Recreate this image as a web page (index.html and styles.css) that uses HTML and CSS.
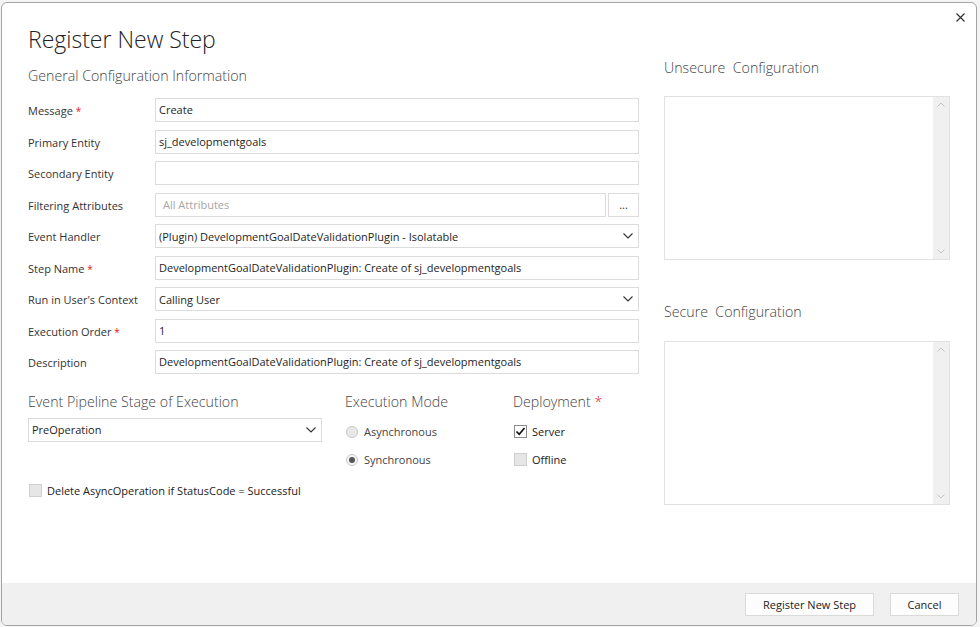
FILE: index.html
```html
<!DOCTYPE html>
<html lang="en">
<head>
    <meta charset="UTF-8">
    <title>Register New Step</title>
    <link rel="stylesheet" href="styles.css">
</head>
<body>
    <div class="dialog">
        <button class="close-btn" title="Close">
            <svg width="9" height="9" viewBox="0 0 9 9"><path d="M0.5 0.5 L8.5 8.5 M8.5 0.5 L0.5 8.5" stroke="#333" stroke-width="1.2"/></svg>
        </button>

        <div class="dialog-body">
            <div class="main-col">
                <h1 class="dialog-title">Register New Step</h1>
                <h2 class="section-title">General Configuration Information</h2>

                <div class="form-grid">
                    <label class="field-label">Message <span class="req">*</span></label>
                    <div class="text-box">Create</div>

                    <label class="field-label">Primary Entity</label>
                    <div class="text-box">sj_developmentgoals</div>

                    <label class="field-label">Secondary Entity</label>
                    <div class="text-box"></div>

                    <label class="field-label">Filtering Attributes</label>
                    <div class="picker">
                        <div class="text-box placeholder">All Attributes</div>
                        <button class="dots-btn">...</button>
                    </div>

                    <label class="field-label">Event Handler</label>
                    <div class="text-box select">
                        <span>(Plugin) DevelopmentGoalDateValidationPlugin - Isolatable</span>
                        <svg class="chevron" width="10" height="6" viewBox="0 0 10 6"><polyline points="0.5,0.5 5,5 9.5,0.5" fill="none" stroke="#333" stroke-width="1.1"/></svg>
                    </div>

                    <label class="field-label">Step Name <span class="req">*</span></label>
                    <div class="text-box">DevelopmentGoalDateValidationPlugin: Create of sj_developmentgoals</div>

                    <label class="field-label">Run in User's Context</label>
                    <div class="text-box select">
                        <span>Calling User</span>
                        <svg class="chevron" width="10" height="6" viewBox="0 0 10 6"><polyline points="0.5,0.5 5,5 9.5,0.5" fill="none" stroke="#333" stroke-width="1.1"/></svg>
                    </div>

                    <label class="field-label">Execution Order <span class="req">*</span></label>
                    <div class="text-box">1</div>

                    <label class="field-label">Description</label>
                    <div class="text-box">DevelopmentGoalDateValidationPlugin: Create of sj_developmentgoals</div>
                </div>

                <div class="options">
                    <div class="option-group stage">
                        <h2 class="section-title">Event Pipeline Stage of Execution</h2>
                        <div class="text-box select">
                            <span>PreOperation</span>
                            <svg class="chevron" width="10" height="6" viewBox="0 0 10 6"><polyline points="0.5,0.5 5,5 9.5,0.5" fill="none" stroke="#333" stroke-width="1.1"/></svg>
                        </div>
                    </div>

                    <div class="option-group">
                        <h2 class="section-title">Execution Mode</h2>
                        <div class="choice"><span class="radio"></span>Asynchronous</div>
                        <div class="choice"><span class="radio on"></span>Synchronous</div>
                    </div>

                    <div class="option-group">
                        <h2 class="section-title">Deployment <span class="req">*</span></h2>
                        <div class="choice dark">
                            <span class="check on">
                                <svg width="11" height="11" viewBox="0 0 11 11"><polyline points="1.5,5.5 4.2,8.3 9.5,2" fill="none" stroke="#111" stroke-width="1.7"/></svg>
                            </span>Server
                        </div>
                        <div class="choice dark"><span class="check"></span>Offline</div>
                    </div>
                </div>

                <div class="choice dark delete-async"><span class="check"></span>Delete AsyncOperation if StatusCode = Successful</div>
            </div>

            <div class="side-col">
                <h2 class="section-title side-title">Unsecure&nbsp; Configuration</h2>
                <div class="config-box">
                    <div class="scrollbar">
                        <svg width="8" height="5" viewBox="0 0 8 5"><polyline points="0.5,4.5 4,1 7.5,4.5" fill="none" stroke="#c4c4c4" stroke-width="1"/></svg>
                        <svg width="8" height="5" viewBox="0 0 8 5"><polyline points="0.5,0.5 4,4 7.5,0.5" fill="none" stroke="#c4c4c4" stroke-width="1"/></svg>
                    </div>
                </div>

                <h2 class="section-title side-title second">Secure&nbsp; Configuration</h2>
                <div class="config-box">
                    <div class="scrollbar">
                        <svg width="8" height="5" viewBox="0 0 8 5"><polyline points="0.5,4.5 4,1 7.5,4.5" fill="none" stroke="#c4c4c4" stroke-width="1"/></svg>
                        <svg width="8" height="5" viewBox="0 0 8 5"><polyline points="0.5,0.5 4,4 7.5,0.5" fill="none" stroke="#c4c4c4" stroke-width="1"/></svg>
                    </div>
                </div>
            </div>
        </div>

        <div class="dialog-footer">
            <button class="btn wide">Register New Step</button>
            <button class="btn">Cancel</button>
        </div>
    </div>
</body>
</html>
```

FILE: styles.css
```css
* {
    margin: 0;
    padding: 0;
    box-sizing: border-box;
}

body {
    font-family: 'Segoe UI', 'Open Sans', sans-serif;
    background-color: #f4f4f4;
    color: #222;
    font-size: 11px;
}

.dialog {
    position: relative;
    width: 976px;
    height: 624px;
    margin: 2px 0 0 1px;
    background-color: white;
    border: 1px solid #a4a4a4;
    border-radius: 6px;
    overflow: hidden;
    display: flex;
    flex-direction: column;
}

.close-btn {
    position: absolute;
    top: 9px;
    right: 10px;
    width: 11px;
    height: 11px;
    border: none;
    background: none;
    display: flex;
    align-items: center;
    justify-content: center;
}

.dialog-body {
    flex: 1;
    display: flex;
    padding-left: 26px;
}

.main-col {
    width: 611px;
}

.side-col {
    width: 286px;
    margin-left: 25px;
}

.dialog-title {
    font-size: 23px;
    font-weight: 300;
    color: #222;
    line-height: 32px;
    margin-top: 20px;
}

.section-title {
    font-size: 14.2px;
    font-weight: 300;
    color: #444;
    line-height: 20px;
}

.main-col > .section-title {
    margin-top: 11px;
}

.req {
    color: #e81123;
}

/* label / field pairs */
.form-grid {
    display: grid;
    grid-template-columns: 127px 1fr;
    grid-auto-rows: 31.5px;
    margin-top: 12px;
}

.field-label {
    font-size: 11px;
    color: #333;
    line-height: 24px;
    padding-top: 1px;
}

.field-label .req {
    font-size: 10px;
}

.text-box {
    height: 24px;
    border: 1px solid #dcdcdc;
    padding: 0 3px;
    line-height: 21px;
    font-size: 11px;
    color: #1e1e1e;
    background-color: white;
    white-space: nowrap;
    overflow: hidden;
}

.text-box.placeholder {
    color: #a6a6a6;
    padding-left: 7px;
}

.text-box.select {
    display: flex;
    align-items: center;
    justify-content: space-between;
    padding-right: 5px;
}

.text-box.select span {
    line-height: 21px;
}

.picker {
    display: flex;
    gap: 2px;
}

.picker .text-box {
    flex: 1;
}

.dots-btn {
    width: 31px;
    height: 24px;
    border: 1px solid #dcdcdc;
    background-color: white;
    font-family: inherit;
    font-size: 11px;
    color: #333;
    line-height: 16px;
}

/* stage, mode and deployment */
.options {
    display: grid;
    grid-template-columns: 317px 168px 1fr;
    margin-top: 10px;
}

.option-group .section-title {
    margin-bottom: 6px;
}

.stage .text-box {
    width: 294px;
    margin-top: 1px;
}

.choice {
    display: flex;
    align-items: center;
    height: 28px;
    font-size: 11px;
    color: #444;
}

.choice.dark {
    color: #222;
}

.radio {
    width: 12px;
    height: 12px;
    border-radius: 50%;
    border: 1px solid #c8c8c8;
    background-color: #e8e8e8;
    margin: 0 6px 0 1px;
    display: flex;
    align-items: center;
    justify-content: center;
}

.radio.on {
    background-color: #f4f4f4;
}

.radio.on::after {
    content: '';
    width: 6px;
    height: 6px;
    border-radius: 50%;
    background-color: #555;
}

.check {
    width: 13px;
    height: 13px;
    border: 1px solid #cfcfcf;
    background-color: #e6e6e6;
    margin: 0 5px 0 1px;
    display: flex;
    align-items: center;
    justify-content: center;
}

.check.on {
    background-color: white;
    border-color: #8a8a8a;
}

.delete-async {
    margin-top: 3px;
}

/* config text areas */
.side-title {
    margin-top: 55px;
    margin-bottom: 18px;
}

.side-title.second {
    margin-top: 42px;
    margin-bottom: 19px;
}

.config-box {
    width: 286px;
    height: 164px;
    border: 1px solid #e2e2e2;
    display: flex;
    justify-content: flex-end;
}

.scrollbar {
    width: 16px;
    background-color: #f0f0f0;
    display: flex;
    flex-direction: column;
    justify-content: space-between;
    align-items: center;
    padding: 5px 0;
}

.dialog-footer {
    height: 42px;
    background-color: #f0f0f0;
    display: flex;
    justify-content: flex-end;
    align-items: center;
    gap: 16px;
    padding-right: 17px;
}

.btn {
    height: 23px;
    width: 69px;
    border: 1px solid #dadada;
    background-color: #fdfdfd;
    font-family: inherit;
    font-size: 11px;
    color: #222;
}

.btn.wide {
    width: 129px;
}
```
